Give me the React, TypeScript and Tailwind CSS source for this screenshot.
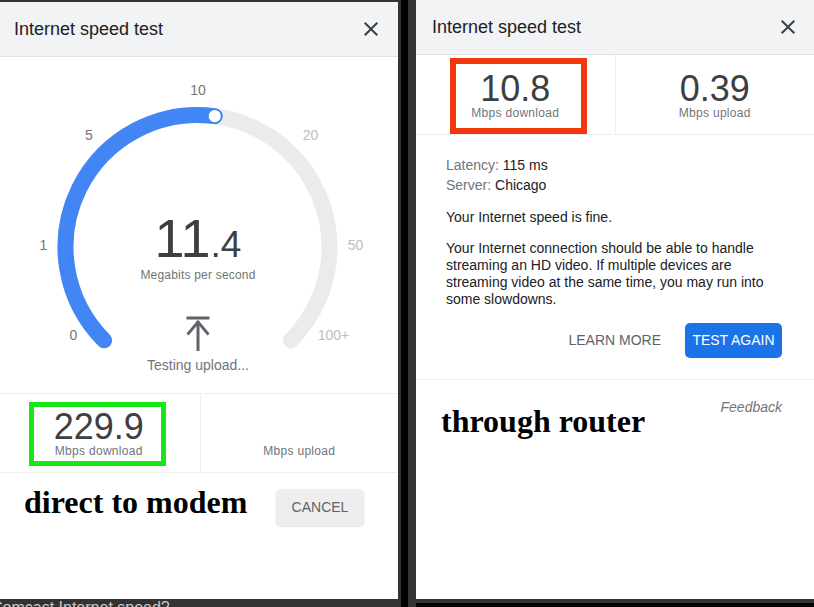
import React from "react";

function CloseIcon() {
  return (
    <svg width="24" height="24" viewBox="0 0 24 24" className="shrink-0">
      <path
        d="M19 6.41L17.59 5 12 10.59 6.41 5 5 6.41 10.59 12 5 17.59 6.41 19 12 13.41 17.59 19 19 17.59 13.41 12z"
        fill="#3c4043"
      />
    </svg>
  );
}

function Header({ pad }: { pad: string }) {
  return (
    <div
      className={`h-[55px] shrink-0 bg-[#f1f3f4] border-b border-[#dfe1e3] flex items-center justify-between ${pad}`}
    >
      <div className="text-[18px] leading-[24px] text-[#202124]">Internet speed test</div>
      <CloseIcon />
    </div>
  );
}

function Gauge() {
  const cx = 197.5;
  const cy = 190;
  const r = 132;
  const pt = (deg: number) => {
    const a = (deg * Math.PI) / 180;
    return [cx + r * Math.sin(a), cy - r * Math.cos(a)];
  };
  const [sx, sy] = pt(-135);
  const [ex, ey] = pt(135);
  const [kx, ky] = pt(7.5);
  return (
    <svg
      width="398"
      height="336"
      viewBox="0 0 398 336"
      className="absolute left-0 top-0"
    >
      <path
        d={`M ${sx} ${sy} A ${r} ${r} 0 1 1 ${ex} ${ey}`}
        stroke="#ebebeb"
        strokeWidth="16"
        fill="none"
        strokeLinecap="round"
      />
      <path
        d={`M ${sx} ${sy} A ${r} ${r} 0 0 1 ${kx} ${ky}`}
        stroke="#4285f4"
        strokeWidth="16"
        fill="none"
        strokeLinecap="round"
      />
      <circle cx={kx} cy={ky} r="6.8" fill="#ffffff" stroke="#4285f4" strokeWidth="1.5" />
      <g fontFamily="'Liberation Sans', Arial, sans-serif" fontSize="14" textAnchor="middle">
        <text x="198" y="38" fill="#757575">10</text>
        <text x="89" y="83" fill="#757575">5</text>
        <text x="310.5" y="83" fill="#bdbdbd">20</text>
        <text x="43.5" y="193" fill="#757575">1</text>
        <text x="355.5" y="193" fill="#bdbdbd">50</text>
        <text x="73.5" y="283" fill="#757575">0</text>
        <text x="333.5" y="283" fill="#bdbdbd">100+</text>
      </g>
    </svg>
  );
}

function UploadIcon() {
  return (
    <svg width="24" height="35" viewBox="0 0 24 35" className="shrink-0">
      <rect x="0.5" y="0.5" width="23" height="3" fill="#5f6368" />
      <line x1="12" y1="5" x2="12" y2="35" stroke="#5f6368" strokeWidth="3" />
      <polyline points="1.5,18.5 12,6 22.5,18.5" fill="none" stroke="#5f6368" strokeWidth="2.8" />
    </svg>
  );
}

function LeftPanel() {
  return (
    <div className="h-[597px] shrink-0 bg-white flex flex-col">
      <Header pad="pl-[14px] pr-[15px]" />
      <div className="relative h-[336px] shrink-0">
        <Gauge />
        <div className="relative flex flex-col items-center pr-[2px] pt-[154px]">
          <div className="text-[54px] leading-[54px] text-[#3c4043]">
            11<span className="text-[37px] leading-none">.4</span>
          </div>
          <div className="mt-[2px] text-[12px] leading-[16px] tracking-[0.2px] text-[#70757a]">
            Megabits per second
          </div>
          <div className="mt-[33px]">
            <UploadIcon />
          </div>
          <div className="mt-[4px] text-[14px] leading-[20px] text-[#70757a]">Testing upload...</div>
        </div>
      </div>
      <div className="h-[80px] shrink-0 border-y border-[#eeeeee] flex">
        <div className="flex-1 relative flex flex-col items-center pt-[18px] pr-[2px]">
          <div className="text-[36px] leading-[30px] text-[#3c4043]">229.9</div>
          <div className="mt-[2px] text-[12px] leading-[14px] tracking-[0.3px] text-[#70757a]">Mbps download</div>
          <div className="absolute left-[29px] top-[8px] w-[137px] h-[64px] border-[5px] border-[#19e619]" />
        </div>
        <div className="flex-1 border-l border-[#eeeeee] flex flex-col items-center pt-[18px]">
          <div className="h-[30px]" />
          <div className="mt-[2px] text-[12px] leading-[14px] tracking-[0.3px] text-[#70757a]">Mbps upload</div>
        </div>
      </div>
      <div className="flex justify-between items-start pl-[24px] pr-[34px] pt-[13px]">
        <div className="font-['Liberation_Serif',serif] font-bold text-[32px] leading-[32px] text-black whitespace-nowrap">
          direct to modem
        </div>
        <button className="mt-[3px] w-[88px] h-[37px] rounded-[5px] bg-[#eeeeee] shadow-[0_1px_2px_rgba(0,0,0,0.12)] text-[14px] text-[#5f6368] flex items-center justify-center">
          CANCEL
        </button>
      </div>
    </div>
  );
}

function RightPanel() {
  return (
    <div className="h-[599px] shrink-0 bg-white flex flex-col relative">
      <Header pad="pl-[16px] pr-[14px]" />
      <div className="h-[80px] shrink-0 border-b border-[#eeeeee] flex">
        <div className="flex-1 relative flex flex-col items-center pt-[19px]">
          <div className="text-[36px] leading-[30px] text-[#3c4043]">10.8</div>
          <div className="mt-[2px] text-[12px] leading-[14px] tracking-[0.3px] text-[#70757a]">Mbps download</div>
          <div className="absolute left-[34px] top-[3px] w-[137px] h-[76px] border-[6px] border-[#f2360d]" />
        </div>
        <div className="flex-1 border-l border-[#eeeeee] flex flex-col items-center pt-[19px]">
          <div className="text-[36px] leading-[30px] text-[#3c4043]">0.39</div>
          <div className="mt-[2px] text-[12px] leading-[14px] tracking-[0.3px] text-[#70757a]">Mbps upload</div>
        </div>
      </div>
      <div className="shrink-0 border-b border-[#eeeeee] pl-[30px] pr-[32px] pt-[20px] pb-[21px] text-[14px] text-[#202124]">
        <div className="leading-[20px]">
          <span className="text-[#70757a]">Latency: </span>115 ms
        </div>
        <div className="leading-[20px]">
          <span className="text-[#70757a]">Server: </span>Chicago
        </div>
        <div className="mt-[12px] leading-[20px]">Your Internet speed is fine.</div>
        <p className="mt-[13px] leading-[17px]">
          Your Internet connection should be able to handle streaming an HD video. If multiple devices are
          streaming video at the same time, you may run into some slowdowns.
        </p>
        <div className="mt-[15px] flex justify-end items-center gap-[24px]">
          <span className="text-[14px] text-[#5f6368]">LEARN MORE</span>
          <button className="w-[97px] h-[35px] rounded-[5px] bg-[#1a73e8] text-white text-[14px] flex items-center justify-center">
            TEST AGAIN
          </button>
        </div>
      </div>
      <div className="pt-[17px] pr-[32px] text-right text-[14px] leading-[20px] italic text-[#70757a]">Feedback</div>
      <div className="absolute left-[25px] top-[405px] font-['Liberation_Serif',serif] font-bold text-[32px] leading-[32px] text-black whitespace-nowrap">
        through router
      </div>
    </div>
  );
}

export default function App() {
  return (
    <div className="w-[814px] h-[607px] bg-[#333333] flex overflow-hidden font-['Liberation_Sans',Arial,sans-serif]">
      <div className="w-[398px] shrink-0 flex flex-col">
        <div className="h-[2px] shrink-0" />
        <LeftPanel />
        <div className="h-[8px] shrink-0 overflow-hidden">
          <div className="-ml-[9px] -mt-[1px] text-[16px] leading-[20px] text-[#c8c8c8] whitespace-nowrap">
            Comcast Internet speed?
          </div>
        </div>
      </div>
      <div className="w-[3px] shrink-0" />
      <div className="w-[7px] shrink-0 bg-black" />
      <div className="w-[8px] shrink-0" />
      <div className="w-[398px] shrink-0 flex flex-col">
        <RightPanel />
        <div className="h-[4px] shrink-0" />
        <div className="flex-1 bg-black" />
      </div>
    </div>
  );
}
